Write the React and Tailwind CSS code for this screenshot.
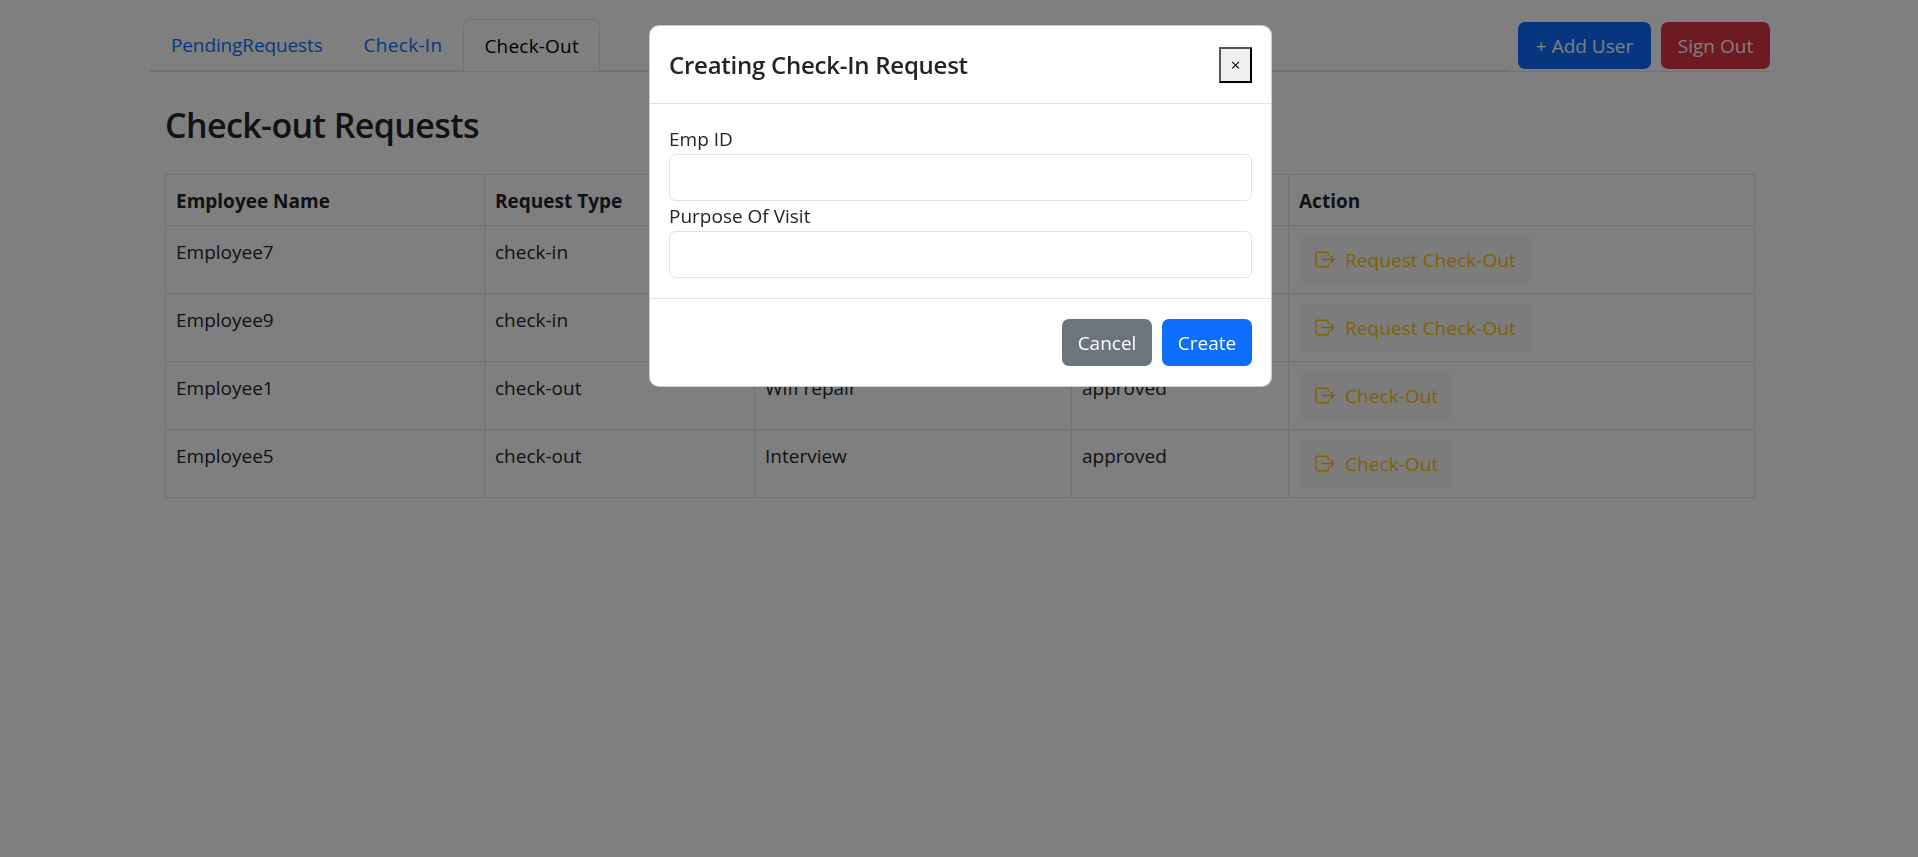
import React from "react";

const rows = [
  { name: "Employee7", type: "check-in", purpose: "Meeting", status: "approved", action: "Request Check-Out" },
  { name: "Employee9", type: "check-in", purpose: "Client visit", status: "approved", action: "Request Check-Out" },
  { name: "Employee1", type: "check-out", purpose: "Wifi repair", status: "approved", action: "Check-Out" },
  { name: "Employee5", type: "check-out", purpose: "Interview", status: "approved", action: "Check-Out" },
];

const LogoutIcon = () => (
  <svg width="20" height="17" viewBox="0 0 20 17" fill="none" stroke="currentColor" strokeWidth="1.4" strokeLinecap="round" strokeLinejoin="round" className="shrink-0">
    <path d="M13.3 4.6V2.8a1.6 1.6 0 0 0-1.6-1.6H2.6A1.6 1.6 0 0 0 1 2.8v11.4a1.6 1.6 0 0 0 1.6 1.6h9.1a1.6 1.6 0 0 0 1.6-1.6v-1.8" />
    <path d="M7 8.5h12M16 5.5l3 3-3 3" />
  </svg>
);

const App = () => {
  return (
    <div className="min-h-[857px] bg-white font-['Open_Sans',sans-serif] text-[19px] leading-[30px] text-[#212529]">
      <div className="pl-[150px] pr-[148px] pt-[19px]">
        <div className="flex items-end gap-[10px] border-b border-[#dee2e6]">
          <div className="flex w-[1358px] border-b-2 border-[#dee2e6] -mb-px">
            <a className="px-[21px] h-[51px] flex items-center tracking-[-0.12px] text-[#0d6efd]">PendingRequests</a>
            <a className="px-[20px] h-[51px] flex items-center tracking-[0.3px] text-[#0d6efd]">Check-In</a>
            <a className="ml-[1px] px-[20px] h-[52px] -mb-[1px] flex items-center tracking-[0.2px] text-[#000] bg-white border border-[#dee2e6] border-b-0 rounded-t-[7px]">Check-Out</a>
          </div>
          <div className="flex gap-[10px] mb-[2px]">
            <button className="h-[47px] w-[133px] rounded-[7px] bg-[#0d6efd] text-white">+ Add User</button>
            <button className="h-[47px] w-[109px] rounded-[7px] bg-[#dc3545] text-white">Sign Out</button>
          </div>
        </div>

        <div className="px-[15px]">
          <h2 className="mt-[29px] mb-[25px] text-[34px] leading-[48px] font-semibold tracking-[-0.6px]">Check-out Requests</h2>
          <table className="table-fixed border-collapse w-[1590px]">
            <thead>
              <tr className="h-[51px]">
                <th className="w-[319px] border border-[#dee2e6] px-[10px] pt-[2px] text-left font-bold">Employee Name</th>
                <th className="w-[270px] border border-[#dee2e6] px-[10px] pt-[2px] text-left font-bold">Request Type</th>
                <th className="w-[317px] border border-[#dee2e6] px-[10px] pt-[2px] text-left font-bold">Purpose Of Visit</th>
                <th className="w-[217px] border border-[#dee2e6] px-[10px] pt-[2px] text-left font-bold">Status</th>
                <th className="border border-[#dee2e6] px-[10px] pt-[2px] text-left font-bold">Action</th>
              </tr>
            </thead>
            <tbody>
              {rows.map((row) => (
                <tr key={row.name} className="h-[68px]">
                  <td className="border border-[#dee2e6] px-[10px] pt-[11px] align-top">{row.name}</td>
                  <td className="border border-[#dee2e6] px-[10px] pt-[11px] align-top">{row.type}</td>
                  <td className="border border-[#dee2e6] px-[10px] pt-[11px] align-top">{row.purpose}</td>
                  <td className="border border-[#dee2e6] px-[10px] pt-[11px] align-top">{row.status}</td>
                  <td className="border border-[#dee2e6] px-[10px] align-middle">
                    <button className="h-[47px] px-[16px] flex items-center gap-[10px] rounded-[7px] bg-[#f8f9fa] text-[#ffc107] tracking-[0.06px]">
                      <LogoutIcon />
                      {row.action}
                    </button>
                  </td>
                </tr>
              ))}
            </tbody>
          </table>
        </div>
      </div>

      {/* modal sits over the page */}
      <div className="fixed inset-0 bg-black/50">
        <div className="absolute left-[649px] top-[25px] w-[623px] rounded-[10px] bg-white border border-black/20">
          <div className="h-[78px] px-[19px] flex items-center justify-between border-b border-[#dee2e6]">
            <h5 className="text-[24px] font-semibold tracking-[-0.25px]">Creating Check-In Request</h5>
            <button className="w-[33px] h-[36px] flex items-center justify-center bg-[#efefef] border-2 border-[#000] border-t-[#555] border-l-[#555] text-[17px] text-black">×</button>
          </div>
          <div className="px-[19px] py-[20px] border-b border-[#dee2e6]">
            <label className="block">Emp ID</label>
            <input className="block w-full h-[47px] rounded-[7px] border border-[#dee2e6] bg-white" />
            <label className="block">Purpose Of Visit</label>
            <input className="block w-full h-[47px] rounded-[7px] border border-[#dee2e6] bg-white" />
          </div>
          <div className="px-[19px] py-[20px] flex justify-end gap-[10px]">
            <button className="w-[90px] h-[47px] rounded-[7px] bg-[#6c757d] text-white">Cancel</button>
            <button className="w-[90px] h-[47px] rounded-[7px] bg-[#0d6efd] text-white">Create</button>
          </div>
        </div>
      </div>
    </div>
  );
};

export default App;
